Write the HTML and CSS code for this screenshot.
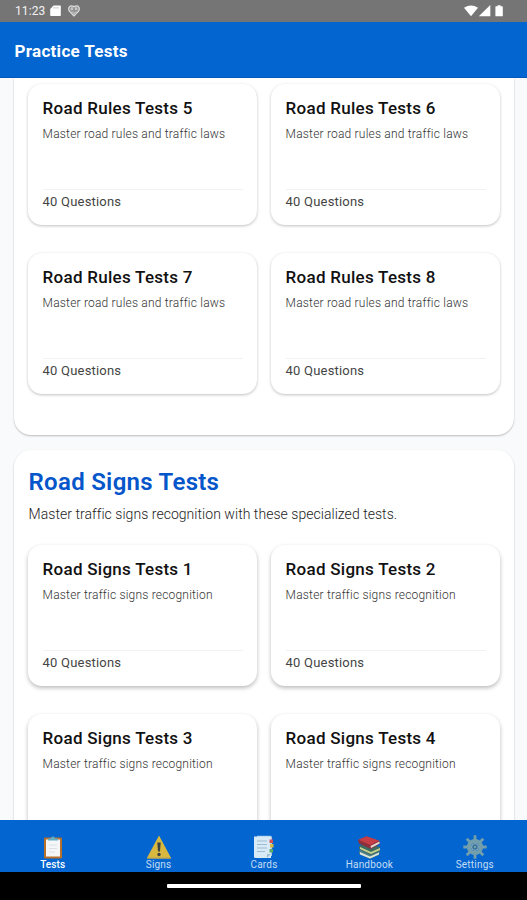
FILE: index.html
```html
<!DOCTYPE html>
<html lang="en">
<head>
<meta charset="utf-8">
<title>Practice Tests</title>
<link rel="stylesheet" href="styles.css">
</head>
<body>
<div class="screen">
  <div class="status">
    <span class="clock">11:23</span>
    <svg class="sd" width="11" height="12" viewBox="0 0 11 12"><path d="M3.6.5H10q.8 0 .8.8v9q0 .8-.8.8H1q-.8 0-.8-.8V4z" fill="#fff"/><path d="M4 2v1.6M6 2v1.6M8 2v1.6" stroke="#aaa" stroke-width=".8"/></svg>
    <svg class="heart" width="12" height="12" viewBox="0 0 12 12"><path d="M6 11 1.600 6.400Q.2 4.500 1 2.600 2-.2 6 1.600q4-1.800 5 1 .8 1.900-.6 3.800z" fill="#949494" stroke="#ddd" stroke-width="1.200"/><path d="M2.500 4h2.500M7 4h2.500M4 6.500l2 2 2-2M4 2v3M8 2v3" fill="none" stroke="#e2e2e2" stroke-width=".8"/></svg>
    <span class="grow"></span>
    <svg class="signal" width="41" height="12" viewBox="0 0 41 12" fill="#fff"><path d="M0 2.800Q7-1.700 14 2.800L7 11.300z"/><path d="M26.300 0v11.300H14.800z"/><path d="M32 1.200h1.600V.2h3v1h1.600q.6 0 .6.600v8.900q0 .6-.6.600H32q-.6 0-.6-.6V1.800q0-.6.600-.6z"/></svg>
  </div>
  <header class="header"><h1>Practice Tests</h1></header>
  <main class="content">
    <section class="panel rules">
      <div class="grid">
        <article class="card"><h3>Road Rules Tests 5</h3><p>Master road rules and traffic laws</p><footer>40 Questions</footer></article>
        <article class="card"><h3>Road Rules Tests 6</h3><p>Master road rules and traffic laws</p><footer>40 Questions</footer></article>
        <article class="card"><h3>Road Rules Tests 7</h3><p>Master road rules and traffic laws</p><footer>40 Questions</footer></article>
        <article class="card"><h3>Road Rules Tests 8</h3><p>Master road rules and traffic laws</p><footer>40 Questions</footer></article>
      </div>
    </section>
    <section class="panel signs">
      <h2>Road Signs Tests</h2>
      <p class="lead">Master traffic signs recognition with these specialized tests.</p>
      <div class="grid">
        <article class="card"><h3>Road Signs Tests 1</h3><p>Master traffic signs recognition</p><footer>40 Questions</footer></article>
        <article class="card"><h3>Road Signs Tests 2</h3><p>Master traffic signs recognition</p><footer>40 Questions</footer></article>
        <article class="card"><h3>Road Signs Tests 3</h3><p>Master traffic signs recognition</p></article>
        <article class="card"><h3>Road Signs Tests 4</h3><p>Master traffic signs recognition</p></article>
      </div>
    </section>
  </main>
  <nav class="tabs">
    <a class="tab active">
      <svg width="24" height="24" viewBox="0 0 24 24"><rect x="3" y="2.500" width="18" height="21" rx="1.200" fill="#b8702c"/><path d="M5 4.500h14v17H5z" fill="#f4f6f8"/><path d="M7 5.500V3.500h3a2 2 0 0 1 4 0h3v2z" fill="#64afc5"/><path d="M8 10h8M8 13.500h8M8 17h6" stroke="#d5dce2" stroke-width=".8"/></svg>
      <span>Tests</span></a>
    <a class="tab">
      <svg width="24" height="24" viewBox="0 0 24 24"><path d="M12 .6 23.800 22.500q.3 1.100-.8 1.100H1q-1.100 0-.8-1.100z" fill="#d9b840"/><path d="M.2 22.400h23.600v1.200H.2z" fill="#b4a35b"/><path d="M10.300 7.500h3.400l-.7 9h-2z" fill="#3d4340"/><circle cx="12" cy="19.500" r="1.700" fill="#3d4340"/></svg>
      <span>Signs</span></a>
    <a class="tab">
      <svg width="24" height="24" viewBox="0 0 24 24"><path d="M5 .8h13.500q1.500 0 1.500 1.500V21H5z" fill="#a9c9e4"/><path d="M2 1.500h15.500q1.500 0 1.500 1.500v20H3.500Q2 23 2 21.500z" fill="#d9eaf7"/><path d="M5 6h10M5 9.500h10M5 13h10M5 16.500h8" stroke="#9dbbd2"/><path d="M17.500 4.500H21V8h-3.500z" fill="#d34f5a"/><path d="M18 9h3.500v3.500H18z" fill="#d9bb48"/><path d="M17.500 14H21v3.500h-3.500z" fill="#5fa96a"/><path d="M15 23v-4h4z" fill="#9dbdd5"/></svg>
      <span>Cards</span></a>
    <a class="tab">
      <svg width="24" height="24" viewBox="0 0 24 24"><path d="m2 16 6-4 15 4-1 4-9 4L2 19z" fill="#4a7c87"/><path d="m3 17 10 4.500 9-4v2l-9 4-10-4z" fill="#dbe4d6"/><path d="m2 11 6-3 15 4v4l-9 4L2 14z" fill="#3c6c62"/><path d="m3 12 11 5 9-4v2l-9 4-11-5z" fill="#c9d48f"/><path d="m1 5 8-3.500 13.500 4.500v3L14 14 2 8.500z" fill="#8e2f3c"/><path d="m1.500 4.800 8-3.500L22 5.500 13.500 10z" fill="#c73d46"/><path d="m13.500 11 9-4.500v2l-8.500 4.500z" fill="#e7ddd5"/></svg>
      <span>Handbook</span></a>
    <a class="tab">
      <svg width="24" height="24" viewBox="0 0 24 24"><g fill="none" stroke="#739fac"><circle cx="12" cy="12" r="6" stroke-width="4.200"/><path d="M12 .3V5M12 19v4.700M.3 12H5M19 12h4.700M3.700 3.700 7 7M17 17l3.300 3.300M20.300 3.700 17 7M7 17l-3.300 3.300" stroke-width="2.800"/></g><circle cx="12" cy="12" r="3.400" fill="#346f9f" stroke="#9cb7b8" stroke-width="1"/><circle cx="12" cy="12" r="1.300" fill="#739fac"/></svg>
      <span>Settings</span></a>
  </nav>
  <div class="gesture"><div class="pill"></div></div>
</div>
</body>
</html>
```
FILE: styles.css
```css
* { box-sizing: border-box; margin: 0; padding: 0; }
body { font-family: Roboto, "Liberation Sans", sans-serif; background: #000; overflow: hidden; }
svg { display: block; }
.screen { width: 527px; height: 900px; display: flex; flex-direction: column; overflow: hidden; }
.status { height: 22px; flex: none; background: #757575; display: flex; align-items: center; padding: 0 22px 1px 15px; color: #f2f2f2; }
.clock { font-size: 12px; line-height: 22px; width: 35px; letter-spacing: .1px; }
.heart { margin-left: 7px; }
.grow { flex: 1; }
.header { height: 56px; flex: none; background: #0365cf; border-bottom: 1px solid #0458bd; padding: 2px 0 0 14.5px; display: flex; align-items: center; }
.header h1 { color: #fff; font-size: 17px; line-height: 24px; font-weight: 700; letter-spacing: .3px; }
.content { height: 742px; flex: none; overflow: hidden; background: #f8fafc; padding: 0 13px 0 14px; }
.panel { background: #fff; border-radius: 17px; box-shadow: 0 1px 2px rgba(0,0,0,.25); padding: 0 14px; }
.rules { height: 357px; padding-top: 6px; border-radius: 0 0 17px 17px; }
.signs { height: 520px; margin-top: 15px; padding-top: 17px; }
.grid { display: grid; grid-template-columns: 229px 229px; column-gap: 14px; row-gap: 28px; }
.card { height: 141px; border-radius: 14px; background: #fff; box-shadow: 0 1px 3px rgba(0,0,0,.25); padding: 13px 14px 0 14.6px; display: flex; flex-direction: column; }
.signs .card { box-shadow: 0 2px 4px rgba(0,0,0,.27); }
.card h3 { font-size: 17px; line-height: 22px; font-weight: 500; color: #111; letter-spacing: .27px; white-space: nowrap; }
.card p { font-size: 12px; line-height: 18px; margin-top: 6px; font-weight: 300; color: #333; letter-spacing: .2px; white-space: nowrap; }
.card footer { margin-top: 46px; border-top: 1px solid #f2f2f2; padding-top: 3px; font-size: 13px; line-height: 18px; color: #444; letter-spacing: .2px; }
.signs h2 { font-size: 24px; line-height: 30px; font-weight: 600; color: #0556ca; letter-spacing: .28px; padding-left: .6px; white-space: nowrap; }
.lead { font-size: 14px; line-height: 20px; margin: 7px 0 21px; padding-left: .6px; font-weight: 300; color: #222; letter-spacing: .04px; white-space: nowrap; }
.tabs { height: 52px; flex: none; background: #0365cf; display: grid; grid-template-columns: repeat(5, 1fr); }
.tab { display: flex; flex-direction: column; align-items: center; padding: 15px 0 0 1px; color: #c5ddf5; font-size: 10px; line-height: 12px; letter-spacing: .2px; }
.tab:first-child { padding-left: 0; }
.active { color: #fff; font-weight: 500; letter-spacing: .1px; }
.gesture { height: 28px; flex: none; background: #000; display: flex; justify-content: center; padding-top: 12px; }
.pill { width: 194px; height: 4px; border-radius: 1px; background: #fff; }
```
